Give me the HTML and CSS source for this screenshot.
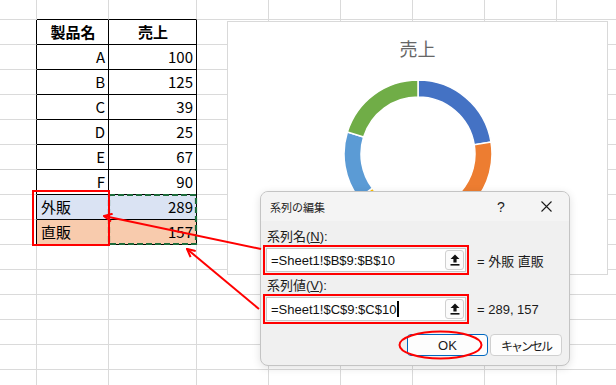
FILE: index.html
```html
<!DOCTYPE html>
<html lang="ja">
<head>
    <meta charset="UTF-8">
    <title>系列の編集</title>
    <link rel="stylesheet" href="styles.css">
</head>
<body>
    <div class="sheet" id="sheet"></div>

    <div class="chart">
        <div class="chart-title">売上</div>
        <svg class="donut" id="donut" width="152" height="152" viewBox="-1 -1 152 152"></svg>
    </div>

    <div class="dialog">
        <div class="dlg-head">
            <span class="dlg-title">系列の編集</span>
            <span class="dlg-help">?</span>
            <span class="dlg-close">
                <svg width="11" height="11" viewBox="0 0 11 11"><path d="M0.5 0.5 L10.5 10.5 M10.5 0.5 L0.5 10.5" stroke="#1b1b1b" stroke-width="1.1"/></svg>
            </span>
        </div>
        <div class="dlg-body">
            <div class="field-label">系列名(<u>N</u>):</div>
            <div class="field-row">
                <div class="mark-box">
                    <div class="ref-input">
                        <span class="ref-text">=Sheet1!$B$9:$B$10</span>
                        <span class="ref-btn"><svg width="10" height="12" viewBox="0 0 10 12"><path d="M5 0.5 L9.5 5 H6.6 V8.6 H3.4 V5 H0.5 Z" fill="#111"/><rect x="0.5" y="10" width="9" height="1.6" fill="#111"/></svg></span>
                    </div>
                </div>
                <span class="preview">= 外販 直販</span>
            </div>
            <div class="field-label second">系列値(<u>V</u>):</div>
            <div class="field-row">
                <div class="mark-box">
                    <div class="ref-input">
                        <span class="ref-text">=Sheet1!$C$9:$C$10<span class="caret"></span></span>
                        <span class="ref-btn"><svg width="10" height="12" viewBox="0 0 10 12"><path d="M5 0.5 L9.5 5 H6.6 V8.6 H3.4 V5 H0.5 Z" fill="#111"/><rect x="0.5" y="10" width="9" height="1.6" fill="#111"/></svg></span>
                    </div>
                </div>
                <span class="preview">= 289, 157</span>
            </div>
            <div class="buttons">
                <button class="btn primary">OK</button>
                <button class="btn cancel">キャンセル</button>
            </div>
        </div>
    </div>

    <svg class="marks" width="616" height="385" viewBox="0 0 616 385">
        <defs>
            <marker id="head" viewBox="0 0 10 10" refX="9" refY="5" markerWidth="10" markerHeight="10" markerUnits="userSpaceOnUse" orient="auto">
                <path d="M1 1 L9 5 L1 9" fill="none" stroke="#ff0000" stroke-width="2"/>
            </marker>
        </defs>
        <rect x="109" y="195" width="87" height="49" fill="none" stroke="#1d6b3a" stroke-width="2.2" stroke-dasharray="6 3"/>
        <rect x="33" y="191" width="76" height="54" fill="none" stroke="#ff0000" stroke-width="2"/>
        <line x1="261" y1="249" x2="104" y2="216" stroke="#ff0000" stroke-width="2" marker-end="url(#head)"/>
        <line x1="259" y1="309" x2="187" y2="249" stroke="#ff0000" stroke-width="2" marker-end="url(#head)"/>
        <ellipse cx="440.5" cy="345" rx="41" ry="13.5" fill="none" stroke="#ff0000" stroke-width="2"/>
    </svg>

    <script>
        const table = [
            ['製品名', '売上'],
            ['A', 100],
            ['B', 125],
            ['C', 39],
            ['D', 25],
            ['E', 67],
            ['F', 90],
            ['外販', 289],
            ['直販', 157]
        ];

        // シートのセルを作る
        const sheet = document.getElementById('sheet');
        for (let r = 0; r < 16; r++) {
            for (let c = 0; c < 9; c++) {
                const cell = document.createElement('div');
                cell.className = 'cell';
                const t = r - 1, k = c - 1;
                if (t >= 0 && t < table.length && k >= 0 && k < 2) {
                    cell.classList.add('tb');
                    cell.textContent = table[t][k];
                    if (t === 0) cell.classList.add('head');
                    else if (k === 1 || t < 7) cell.classList.add('num');
                    if (t === 7) cell.classList.add('ext');
                    if (t === 8) cell.classList.add('direct');
                }
                if (c === 0 && t >= 0 && t < table.length) cell.classList.add('tb-left');
                if (r === 0 && (c === 1 || c === 2)) cell.classList.add('tb-top');
                if (c === 8) cell.classList.add('last');
                sheet.appendChild(cell);
            }
        }

        // ドーナツグラフ
        const colors = ['#4472c4', '#ed7d31', '#a5a5a5', '#ffc000', '#5b9bd5', '#70ad47'];
        const values = table.slice(1, 7).map(row => row[1]);
        const total = values.reduce((a, b) => a + b, 0);
        const donut = document.getElementById('donut');
        const cx = 75, cy = 75, R = 74, r = 57;
        const pt = (rad, a) => (cx + rad * Math.sin(a)).toFixed(2) + ' ' + (cy - rad * Math.cos(a)).toFixed(2);
        let start = 0;
        values.forEach((v, i) => {
            const end = start + v / total * Math.PI * 2;
            const large = end - start > Math.PI ? 1 : 0;
            const d = 'M' + pt(R, start) + ' A' + R + ' ' + R + ' 0 ' + large + ' 1 ' + pt(R, end) +
                ' L' + pt(r, end) + ' A' + r + ' ' + r + ' 0 ' + large + ' 0 ' + pt(r, start) + ' Z';
            const path = document.createElementNS('http://www.w3.org/2000/svg', 'path');
            path.setAttribute('d', d);
            path.setAttribute('fill', colors[i]);
            path.setAttribute('stroke', '#fff');
            path.setAttribute('stroke-width', '1.5');
            donut.appendChild(path);
            start = end;
        });
    </script>
</body>
</html>
```

FILE: styles.css
```css
body {
    margin: 0;
    width: 616px;
    height: 385px;
    overflow: hidden;
    position: relative;
    background: #fff;
    font-family: "Liberation Sans", "Noto Sans CJK JP", sans-serif;
    color: #000;
}

.sheet {
    width: 616px;
    height: 385px;
    overflow: hidden;
    display: grid;
    grid-template-columns: 37px 72px 88px repeat(5, 72px) 59px;
    grid-template-rows: 20px repeat(15, 25px);
    font-family: "Noto Sans CJK JP", sans-serif;
    font-size: 15px;
}

.cell {
    box-sizing: border-box;
    border-right: 1px solid #dadada;
    border-bottom: 1px solid #dadada;
    line-height: 24px;
    padding: 0 3px 0 4px;
    white-space: nowrap;
    overflow: hidden;
}

.cell.last {
    border-right: none;
}

.cell.tb {
    border-color: #000;
}

.cell.tb-left {
    border-right-color: #000;
}

.cell.tb-top {
    border-bottom-color: #000;
}

.cell.head {
    font-weight: bold;
    text-align: center;
}

.cell.num {
    text-align: right;
}

.cell.ext {
    background: #dae3f3;
}

.cell.direct {
    background: #f8cbad;
}

/* グラフ */
.chart {
    position: absolute;
    left: 227px;
    top: 21px;
    width: 381px;
    height: 254px;
    box-sizing: border-box;
    border: 1px solid #d9d9d9;
    background: #fff;
    display: flex;
    flex-direction: column;
    align-items: center;
    padding-top: 15px;
}

.chart-title {
    font-family: "Noto Sans CJK JP", sans-serif;
    font-size: 18px;
    line-height: 22px;
    color: #666;
}

.donut {
    margin-top: 19px;
}

/* ダイアログ */
.dialog {
    position: absolute;
    left: 260px;
    top: 191px;
    width: 310px;
    height: 175px;
    box-sizing: border-box;
    border: 1px solid #c4c4c4;
    border-radius: 8px;
    background: #f0f0f0;
    box-shadow: 0 2px 8px rgba(0, 0, 0, 0.12);
    overflow: hidden;
}

.dlg-head {
    height: 29px;
    display: flex;
    align-items: center;
    background: #f4f4f4;
}

.dlg-title {
    padding-left: 9px;
    font-size: 11px;
    color: #1b1b1b;
}

.dlg-help {
    margin-left: auto;
    width: 44px;
    text-align: center;
    font-size: 14px;
    color: #1b1b1b;
}

.dlg-close {
    width: 46px;
    display: flex;
    justify-content: center;
}

.dlg-body {
    padding: 8px 7px 0 2px;
}

.field-label {
    margin-left: 4px;
    line-height: 16px;
    font-size: 13px;
    color: #1b1b1b;
}

.field-label.second {
    margin-top: 3px;
}

.field-row {
    display: flex;
    align-items: center;
}

.mark-box {
    width: 206px;
    height: 30px;
    box-sizing: border-box;
    border: 2px solid #ff0000;
    padding: 1px;
}

.ref-input {
    height: 100%;
    box-sizing: border-box;
    border: 1px solid #c8c8c8;
    background: #fff;
    display: flex;
    align-items: center;
    padding: 0 1px 0 4px;
}

.ref-text {
    flex: 1;
    font-size: 13px;
    color: #111;
    display: flex;
    align-items: center;
}

.caret {
    display: inline-block;
    width: 2px;
    height: 16px;
    background: #000;
    margin-left: 1px;
}

.ref-btn {
    width: 19px;
    height: 20px;
    box-sizing: border-box;
    border: 1px solid #d0d0d0;
    border-radius: 3px;
    background: #fbfbfb;
    display: flex;
    align-items: center;
    justify-content: center;
}

.preview {
    margin-left: 8px;
    font-size: 13px;
    color: #1b1b1b;
}

.buttons {
    margin-top: 10px;
    display: flex;
    justify-content: flex-end;
    gap: 2px;
}

.btn {
    height: 22px;
    box-sizing: border-box;
    border: 1px solid #d0d0d0;
    border-radius: 4px;
    background: #fdfdfd;
    font-family: "Liberation Sans", "Noto Sans CJK JP", sans-serif;
    font-size: 12px;
    color: #1b1b1b;
    padding: 0;
}

.btn.primary {
    width: 81px;
    border-color: #0067c0;
    font-size: 13px;
}

.btn.cancel {
    width: 72px;
    letter-spacing: -2px;
}

.marks {
    position: absolute;
    left: 0;
    top: 0;
    pointer-events: none;
}
```
